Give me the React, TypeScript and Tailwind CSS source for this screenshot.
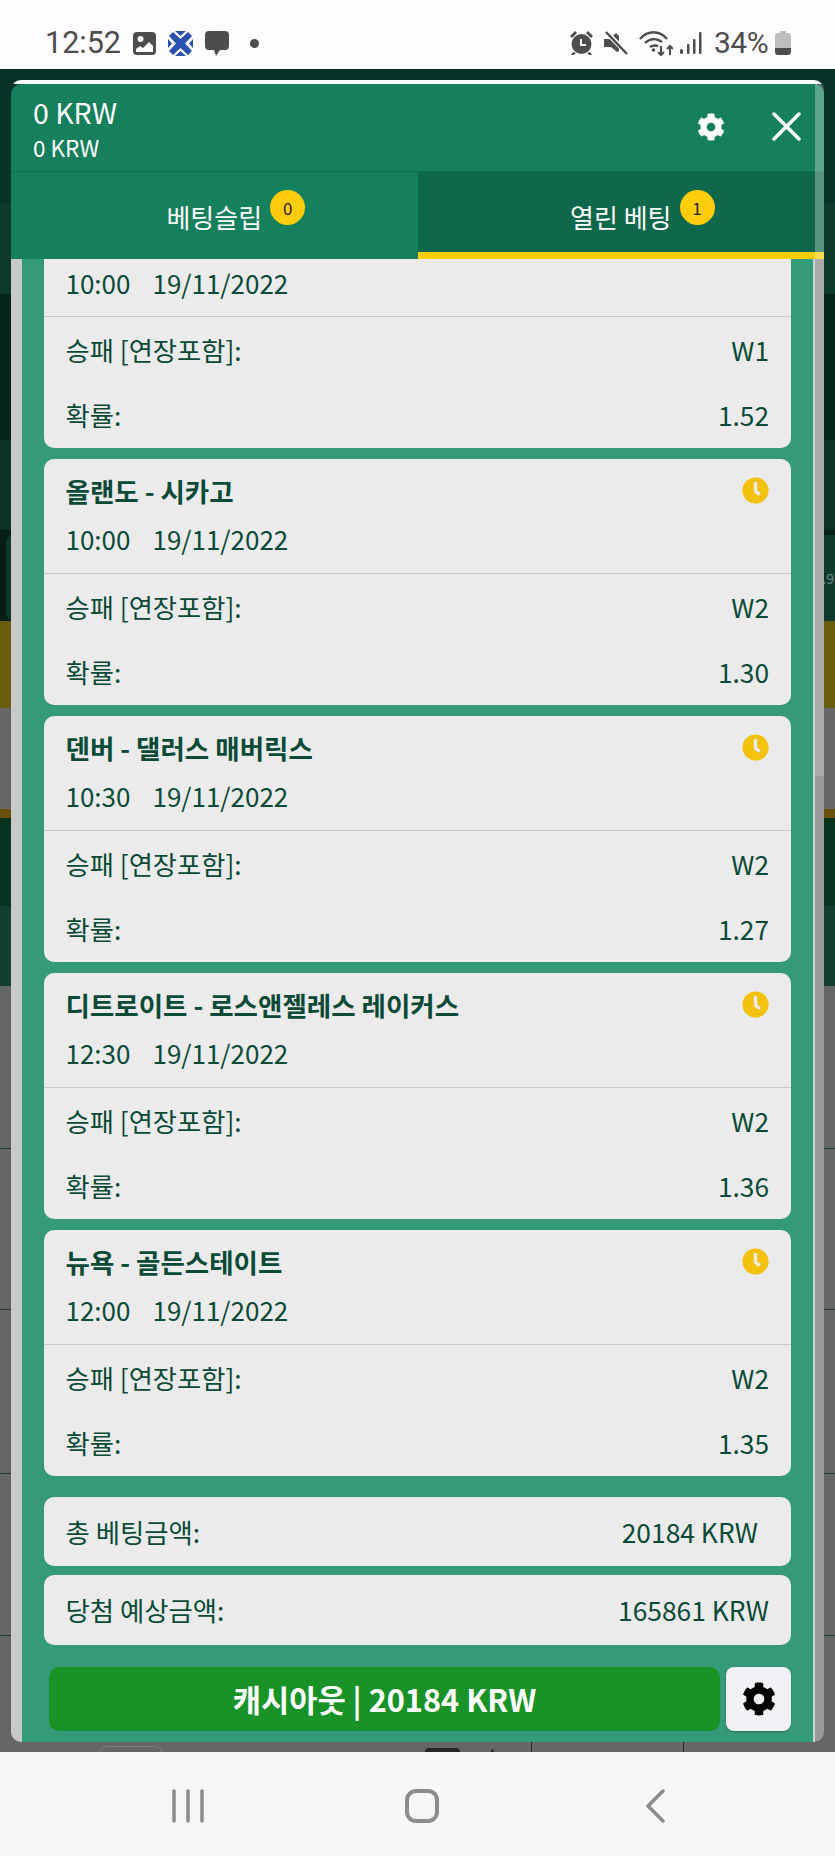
import React from 'react';
import { FaClock, FaCog } from 'react-icons/fa';

type Bet = { title?: string; time: string; pick: string; odds: string };

const bets: Bet[] = [
  { time: '10:00', pick: 'W1', odds: '1.52' },
  { title: '올랜도 - 시카고', time: '10:00', pick: 'W2', odds: '1.30' },
  { title: '덴버 - 댈러스 매버릭스', time: '10:30', pick: 'W2', odds: '1.27' },
  { title: '디트로이트 - 로스앤젤레스 레이커스', time: '12:30', pick: 'W2', odds: '1.36' },
  { title: '뉴욕 - 골든스테이트', time: '12:00', pick: 'W2', odds: '1.35' },
];

const StatusIcons: React.FC = () => (
  <div className="flex h-[69px] shrink-0 items-center bg-[#fefcfe] pl-[45px] pr-[44px] pt-[17px] text-[#4d4d4d]">
    <span className="w-[88px] font-['Roboto',sans-serif] text-[30.5px] leading-none">12:52</span>
    <svg className="h-[23px] w-[23px]" viewBox="0 0 23 23" fill="currentColor">
      <path fillRule="evenodd" d="M4 0h15a4 4 0 0 1 4 4v15a4 4 0 0 1-4 4H4a4 4 0 0 1-4-4V4a4 4 0 0 1 4-4Zm3.500 4a3 3 0 1 0 0 6 3 3 0 0 0 0-6ZM3 20h17v-6l-4-4-6 6-3-2-4 3Z" />
    </svg>
    <svg className="ml-[12px] h-[25px] w-[25px]" viewBox="0 0 25 25" fill="#2b50b0">
      <path d="M1 5 5 1l7.500 7L20 1l4 4-7 7.500 7 7.500-4 4-7.500-7L5 24l-4-4 7-7.500Z" />
      <path d="M7 0h11l-5.500 5ZM7 25h11l-5.500-5ZM0 8v9l4-4.500ZM25 8v9l-4-4.500Z" />
    </svg>
    <svg className="ml-[12px] h-[25px] w-[24px]" viewBox="0 0 24 25" fill="currentColor">
      <path d="M4 0h16a4 4 0 0 1 4 4v11a4 4 0 0 1-4 4h-5l-4 6-2-6H4a4 4 0 0 1-4-4V4a4 4 0 0 1 4-4Z" />
    </svg>
    <span className="ml-[21px] h-[9px] w-[9px] rounded-full bg-[#4d4d4d]" />
    <div className="flex-1" />
    <svg className="h-[24px] w-[23px]" viewBox="0 0 23 24" fill="currentColor">
      <path fillRule="evenodd" d="M11.500 3a10 10 0 1 1 0 20 10 10 0 0 1 0-20Zm-1.500 5v7h6v-2h-4V8Z" />
      <path d="M0 5 5 0l2 2-5 5ZM23 5l-5-5-2 2 5 5ZM3 21l-2 3h3l2-2ZM20 21l2 3h-3l-2-2Z" />
    </svg>
    <svg className="ml-[11px] h-[24px] w-[24px]" viewBox="0 0 24 24" fill="currentColor">
      <path d="M0 8h6l6-6 3 3v15l-2 1-6-5H0Z" />
      <path d="M1 0 24 23" fill="none" stroke="#fefcfe" strokeWidth="5" />
      <path d="M2 1 23 23" fill="none" stroke="currentColor" strokeWidth="2.500" />
    </svg>
    <svg className="ml-[11px] h-[26px] w-[34px]" viewBox="0 0 34 26" fill="none" stroke="currentColor" strokeWidth="2.400">
      <path d="M1 9c8-9 19-9 27 0M6 13c5-5 12-5 17-1M11 17c3-2 5-2 8-1" />
      <circle cx="14.500" cy="20" r="1.800" fill="currentColor" stroke="none" />
      <path d="M22 16v9m-3-3 3 3 3-3M31 25v-9m-3 3 3-3 3 3" strokeWidth="2" />
    </svg>
    <svg className="ml-[7px] h-[22px] w-[22px]" viewBox="0 0 22 22" fill="currentColor">
      <rect x="0" y="17" width="3" height="5" rx="1.500" />
      <rect x="7" y="12" width="2.500" height="10" rx="1" />
      <rect x="13" y="7" width="2.500" height="15" rx="1" />
      <rect x="19" y="0" width="2.500" height="22" rx="1" />
    </svg>
    <span className="ml-[12px] w-[55px] font-['Roboto',sans-serif] text-[30px] leading-none tracking-[-0.5px]">34%</span>
    <svg className="ml-[6px] h-[24px] w-[16px]" viewBox="0 0 16 24">
      <path fill="#bdbdbd" d="M5 0h6v2h2a3 3 0 0 1 3 3v4H0V5a3 3 0 0 1 3-3h2Z" />
      <path fill="#bdbdbd" d="M0 9h16v8H0Z" />
      <path fill="#4d4d4d" d="M0 17h16v4a3 3 0 0 1-3 3H3a3 3 0 0 1-3-3Z" />
    </svg>
  </div>
);

const PageBehind: React.FC = () => (
  <div className="flex flex-1 flex-col overflow-hidden">
    <div className="h-[134px] bg-[#07322a]" />
    <div className="h-[91px] bg-[#0c3a2c]" />
    <div className="h-[146px] bg-[#04241a]" />
    <div className="h-[90px] bg-[#0a3324]" />
    <div className="flex h-[91px] border-t-[5px] border-[#05201a] bg-[#051f17] pl-[6px]">
      <div className="flex flex-1 items-center justify-end rounded-l-[8px] bg-[#0d3a2d] pr-[1px]">
        <span className="text-[14px] leading-[14px] text-[#6f8a80]">4.9</span>
      </div>
    </div>
    <div className="h-[87px] bg-[#685c0d]" />
    <div className="h-[101px] bg-[#666666]" />
    <div className="h-[9px] bg-[#6b500b]" />
    <div className="h-[88px] bg-[#08331f]" />
    <div className="h-[80px] bg-[#143f30]" />
    <div className="h-[163px] border-b border-[#1e3a30] bg-[#666666]" />
    <div className="h-[161px] border-b border-[#1e3a30] bg-[#666666]" />
    <div className="h-[164px] border-b border-[#1e3a30] bg-[#666666]" />
    <div className="h-[162px] border-b border-[#1e3a30] bg-[#666666]" />
    <div className="relative flex-1 bg-[#666666]">
      <div className="absolute bottom-0 left-[100px] h-[6px] w-[62px] rounded-t-[6px] border border-b-0 border-[#7d7d7d]" />
      <div className="absolute bottom-0 left-[425px] h-[4px] w-[35px] rounded-t-[4px] bg-[#262626]" />
      <div className="absolute bottom-0 left-[491px] h-[3px] w-[3px] rounded-t-full bg-[#333333]" />
      <div className="absolute bottom-0 left-[531px] h-[10px] w-[1px] bg-[#262626]" />
      <div className="absolute bottom-0 left-[683px] h-[10px] w-[1px] bg-[#262626]" />
    </div>
  </div>
);

const BetCard: React.FC<{ bet: Bet }> = ({ bet }) => (
  <div className={`bg-[#ebebeb] ${bet.title ? 'rounded-[10px]' : 'rounded-b-[10px]'}`}>
    <div className={`relative px-[22px] ${bet.title ? 'h-[114px] pt-[13px]' : 'h-[57px] pt-[0px]'}`}>
      {bet.title && (
        <>
          <div className="h-[38px] text-[26.5px] font-bold leading-[38px]">{bet.title}</div>
          <FaClock className="absolute right-[22px] top-[18px] h-[27px] w-[27px] text-[#f4c20d]" />
        </>
      )}
      <div className={`text-[26px] leading-[48px] ${bet.title ? 'mt-[5px]' : ''}`}>
        <span>{bet.time}</span>
        <span className="ml-[22px]">19/11/2022</span>
      </div>
    </div>
    <div className="h-[1px] bg-[#c8c8c8]" />
    <div className="px-[22px] pt-[1px] text-[26.3px]">
      <div className="flex h-[63px] items-center justify-between">
        <span>승패 [연장포함]:</span>
        <span>{bet.pick}</span>
      </div>
      <div className="flex h-[67px] items-center justify-between">
        <span>확률:</span>
        <span>{bet.odds}</span>
      </div>
    </div>
  </div>
);

const Tab: React.FC<{ label: string; count: number; active?: boolean }> = ({ label, count, active }) => (
  <div
    className={`flex flex-1 items-start justify-center pt-[26px] ${
      active ? 'border-b-[7px] border-[#ffcc0a] bg-[#10684c]' : 'bg-[#167f5c]'
    }`}
  >
    <span className="relative text-[26px] leading-[38px] text-white">
      {label}
      <span className="absolute left-[calc(100%+8px)] top-[-8px] flex h-[35px] w-[35px] items-center justify-center rounded-full bg-[#ffcc0a] text-[17px] text-[#222222]">
        {count}
      </span>
    </span>
  </div>
);

const BetPanel: React.FC = () => (
  <div className="absolute left-[11px] top-[80px] flex h-[1662px] w-[813px] flex-col overflow-hidden rounded-[10px] text-[#0a4a36]">
    <div className="h-[4px] shrink-0 bg-white" />
    <div className="relative flex h-[87px] shrink-0 items-center justify-between rounded-t-[10px] bg-[#167f5c] pl-[22px] pr-[23px] text-white">
      <div>
        <div className="text-[28.5px] leading-[38px]">0 KRW</div>
        <div className="text-[22.5px] leading-[32px]">0 KRW</div>
      </div>
      <div className="mt-[-2px] flex items-center gap-[47px]">
        <FaCog className="h-[28px] w-[28px]" />
        <svg className="h-[29px] w-[29px]" viewBox="0 0 29 29" fill="none" stroke="white" strokeWidth="3.500" strokeLinecap="round">
          <path d="M2 2 27 27M27 2 2 27" />
        </svg>
      </div>
    </div>
    <div className="flex h-[88px] shrink-0 border-t border-[#12704f]">
      <Tab label="베팅슬립" count={0} />
      <Tab label="열린 베팅" count={1} active />
    </div>
    <div className="flex min-h-0 flex-1">
      <div className="w-[11px] shrink-0 bg-[#c9c9c9]" />
      <div className="flex min-w-0 flex-1 flex-col bg-[#359a79] pl-[21.5px] pr-[22px]">
        <div className="flex flex-col gap-[11px]">
          {bets.map((bet) => (
            <BetCard key={bet.time + bet.odds} bet={bet} />
          ))}
        </div>
        <div className="mt-[21px] flex h-[69px] items-center justify-between rounded-[10px] bg-[#ebebeb] pl-[22px] pr-[33px] text-[26.4px]">
          <span>총 베팅금액:</span>
          <span>20184 KRW</span>
        </div>
        <div className="mt-[9px] flex h-[70px] items-center justify-between rounded-[10px] bg-[#ebebeb] px-[22px] text-[26.4px]">
          <span>당첨 예상금액:</span>
          <span>165861 KRW</span>
        </div>
        <div className="mt-[22px] flex h-[64px] gap-[6px] pl-[5.5px]">
          <button className="flex-1 rounded-[10px] bg-[#199328] text-[30.7px] font-bold text-white">캐시아웃 | 20184 KRW</button>
          <button className="flex w-[65px] items-center justify-center rounded-[8px] bg-[#f0f0f5] shadow-[0_1px_2px_rgba(0,0,0,0.3)]">
            <FaCog className="h-[34px] w-[34px] text-black" />
          </button>
        </div>
      </div>
      <div className="w-[2px] shrink-0 bg-[#c3d6cf]" />
      <div className="w-[9px] shrink-0 bg-[#999999]">
        <div className="h-[517px] bg-[#ababab]" />
      </div>
    </div>
    <div className="absolute right-0 top-[4px] h-[175px] w-[9px] bg-white/30" />
  </div>
);

const NavBar: React.FC = () => (
  <div className="relative flex h-[104px] shrink-0 bg-[#f6f6f6] text-[#8c8c8c]">
    <div className="flex h-full w-full items-center pt-[4px]">
      <svg className="ml-[172px] h-[34px] w-[32px]" viewBox="0 0 32 34" fill="none" stroke="currentColor" strokeWidth="3.500" strokeLinecap="round">
        <path d="M2 2v30M16 2v30M30 2v30" />
      </svg>
      <svg className="ml-[201px] h-[34px] w-[34px]" viewBox="0 0 34 34" fill="none" stroke="currentColor" strokeWidth="4">
        <rect x="2" y="2" width="30" height="30" rx="9" />
      </svg>
      <svg className="ml-[207px] h-[34px] w-[19px]" viewBox="0 0 19 34" fill="none" stroke="currentColor" strokeWidth="3.500" strokeLinecap="round" strokeLinejoin="round">
        <path d="M17 2 2 17l15 15" />
      </svg>
    </div>
  </div>
);

export default function App() {
  return (
    <div className="relative flex h-[1856px] w-[835px] flex-col overflow-hidden bg-[#666666] font-['Noto_Sans_CJK_KR','Noto_Sans',sans-serif]">
      <StatusIcons />
      <PageBehind />
      <NavBar />
      <BetPanel />
    </div>
  );
}
